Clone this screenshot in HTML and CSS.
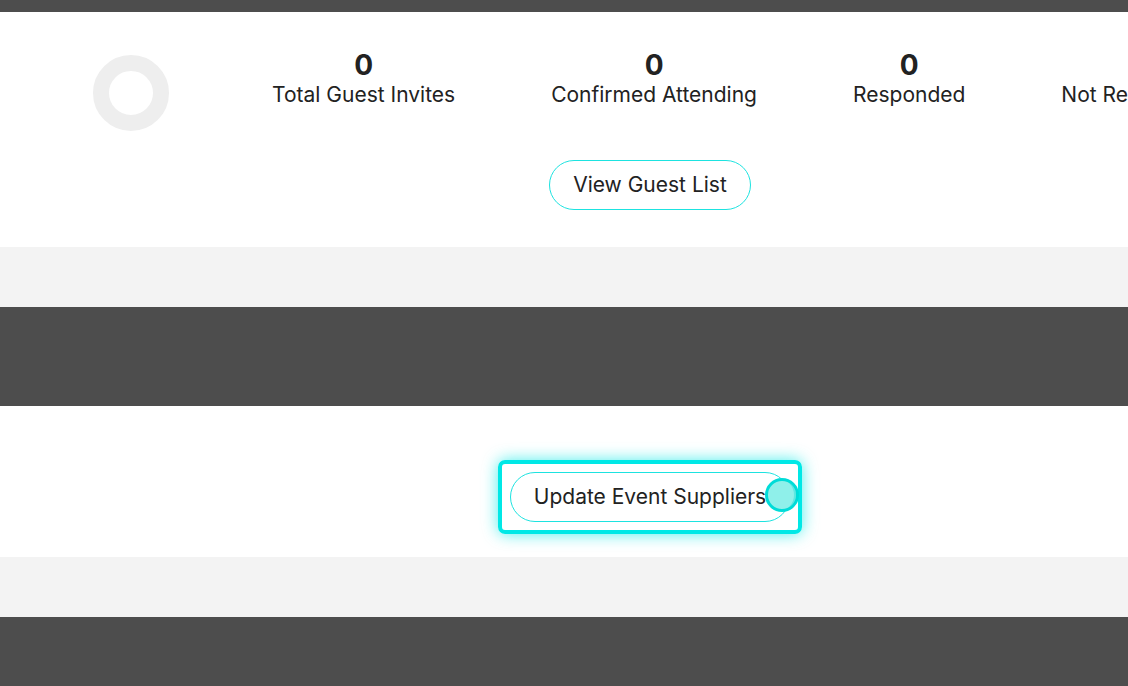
FILE: index.html
```html
<!DOCTYPE html>
<html lang="en">

<head>
  <meta charset="UTF-8">
  <meta name="viewport" content="width=device-width, initial-scale=1.0">
  <title>Event Overview</title>
  <link rel="stylesheet" href="styles.css">
</head>

<body>
  <div class="page">

    <div class="band dark top"></div>

    <!-- Guest summary -->
    <section class="panel guests">
      <div class="stats">
        <div class="ring"></div>
        <div class="stat">
          <div class="stat-num">0</div>
          <div class="stat-label">Total Guest Invites</div>
        </div>
        <div class="stat">
          <div class="stat-num">0</div>
          <div class="stat-label">Confirmed Attending</div>
        </div>
        <div class="stat">
          <div class="stat-num">0</div>
          <div class="stat-label">Responded</div>
        </div>
        <div class="stat">
          <div class="stat-num">0</div>
          <div class="stat-label">Not Responded</div>
        </div>
      </div>
      <a class="pill-btn" href="#">View Guest List</a>
    </section>

    <div class="band light"></div>
    <div class="band dark mid"></div>

    <!-- Suppliers -->
    <section class="panel suppliers">
      <span class="focus-box">
        <a class="pill-btn" href="#">Update Event Suppliers</a>
        <span class="touch-dot"></span>
      </span>
    </section>

    <div class="band light"></div>
    <div class="band dark bottom"></div>

  </div>
</body>

</html>
```

FILE: styles.css
```css
body {
  margin: 0;
  overflow: hidden;
  font-family: Inter, "Noto Sans", sans-serif;
  color: #222;
  background: #fff;
}

.page {
  width: 1300px;
}

.band.dark {
  background: #4d4d4d;
}

.band.top {
  height: 12px;
}

.band.mid {
  height: 99px;
}

.band.bottom {
  height: 80px;
}

.band.light {
  background: #f3f3f3;
  height: 60px;
}

.panel {
  background: #fff;
  display: flex;
  flex-direction: column;
  align-items: center;
}

.guests {
  padding: 36px 0 37px;
  gap: 29px;
}

.stats {
  display: flex;
  align-items: flex-start;
  gap: 96px;
  margin-left: 8px;
}

.ring {
  width: 44px;
  height: 44px;
  border: 16px solid #eeeeee;
  border-radius: 50%;
  margin-top: 7px;
  margin-right: 7px;
}

.stat {
  text-align: center;
  white-space: nowrap;
}

.stat-num {
  font-size: 28px;
  line-height: 34px;
  font-weight: 700;
}

.stat-label {
  font-size: 21px;
  line-height: 25px;
}

.pill-btn {
  display: inline-block;
  height: 48px;
  line-height: 48px;
  padding: 0 23px;
  border: 1px solid #1de3e0;
  border-radius: 25px;
  font-size: 21px;
  color: #222;
  text-decoration: none;
  background: #fff;
  white-space: nowrap;
}

.suppliers {
  padding: 54px 0 23px;
}

/* keyboard focus highlight */
.focus-box {
  position: relative;
  display: inline-block;
  padding: 8px;
  border: 4px solid #00e8e6;
  border-radius: 7px;
  box-shadow: 0 0 16px rgba(0, 232, 230, 0.7);
  line-height: 0;
}

.touch-dot {
  position: absolute;
  right: -1px;
  top: 14px;
  width: 28px;
  height: 28px;
  border: 3px solid #00dcd8;
  border-radius: 50%;
  background: #8ff0ea;
  box-shadow: inset -5px 0 0 -3px #5ee8e2;
}
```
